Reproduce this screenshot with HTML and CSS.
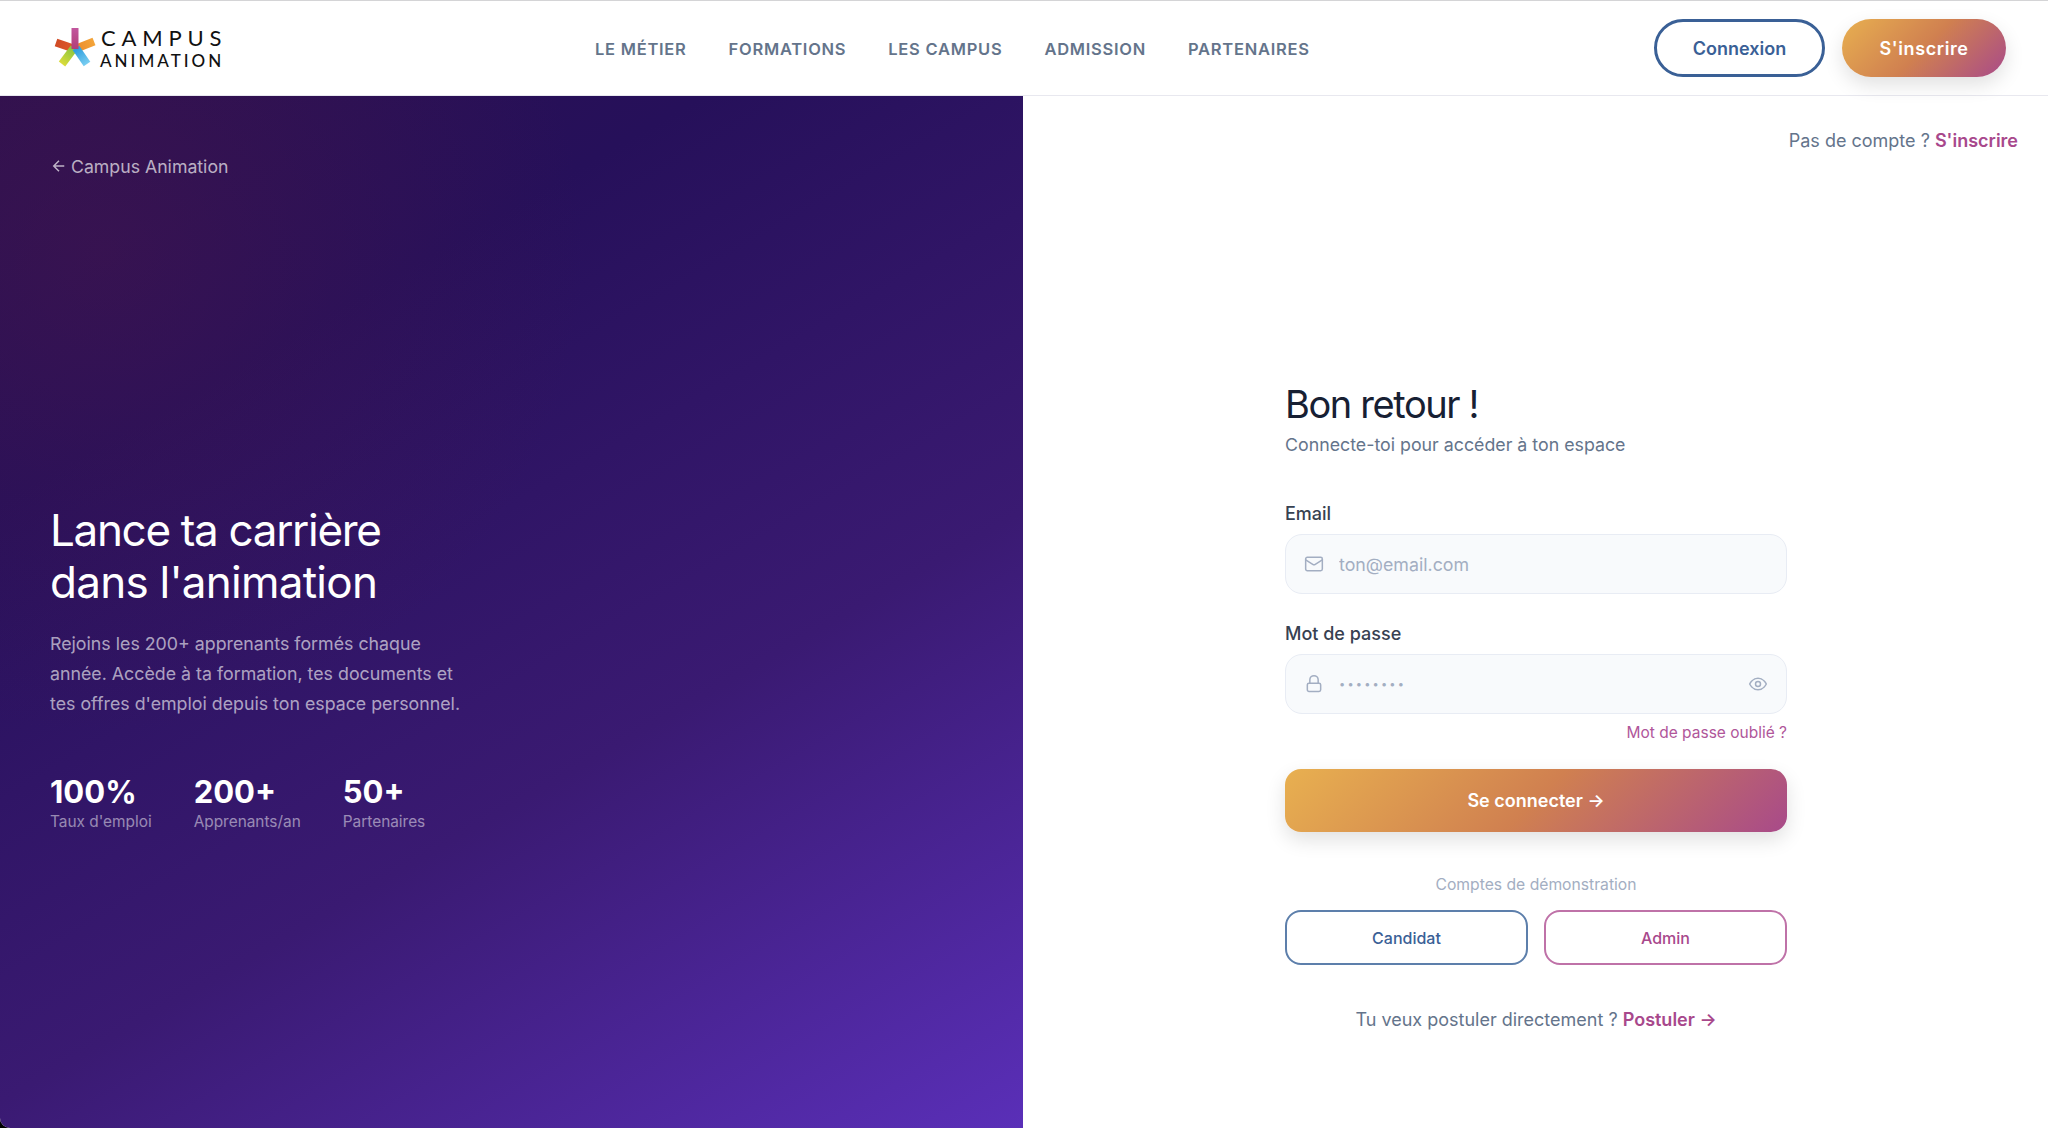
FILE: index.html
```html
<!DOCTYPE html>
<html lang="fr">
<head>
  <meta charset="UTF-8" />
  <meta name="viewport" content="width=device-width, initial-scale=1" />
  <title>Connexion - Campus Animation</title>
  <link rel="stylesheet" href="styles.css">
</head>
<body>
  <div class="page">
    <header class="navbar">
      <a class="logo" href="#">
        <svg class="logo-star" viewBox="0 0 44 42" width="44" height="42">
          <defs>
            <linearGradient id="armTop" gradientUnits="userSpaceOnUse" x1="21" y1="1" x2="21" y2="22"><stop offset="0" stop-color="#c2569e"/><stop offset="1" stop-color="#b13f78"/></linearGradient>
            <linearGradient id="armLeft" gradientUnits="userSpaceOnUse" x1="1" y1="15" x2="21" y2="22"><stop offset="0" stop-color="#cf4a24"/><stop offset="1" stop-color="#e0592b"/></linearGradient>
            <linearGradient id="armRight" gradientUnits="userSpaceOnUse" x1="41" y1="14" x2="21" y2="22"><stop offset="0" stop-color="#f4a63a"/><stop offset="1" stop-color="#ea8a2c"/></linearGradient>
            <linearGradient id="armLime" gradientUnits="userSpaceOnUse" x1="9" y1="38" x2="20" y2="23"><stop offset="0" stop-color="#dcdc3a"/><stop offset="1" stop-color="#8cc63f"/></linearGradient>
            <linearGradient id="armBlue" gradientUnits="userSpaceOnUse" x1="33" y1="38" x2="22" y2="23"><stop offset="0" stop-color="#7dd0f2"/><stop offset="1" stop-color="#2f9ede"/></linearGradient>
          </defs>
          <path d="M21 22 L2 15.5" stroke="url(#armLeft)" stroke-width="8" stroke-linejoin="round"/>
          <path d="M21 22 L40 14.5" stroke="url(#armRight)" stroke-width="8"/>
          <path d="M20 21 L8 37" stroke="url(#armLime)" stroke-width="8"/>
          <path d="M22 21 L33 37" stroke="url(#armBlue)" stroke-width="8"/>
          <path d="M21 1 L21 22" stroke="url(#armTop)" stroke-width="7"/>
        </svg>
        <span class="logo-text">
          <span class="logo-campus">CAMPUS</span>
          <span class="logo-animation">ANIMATION</span>
        </span>
      </a>

      <nav class="nav-links">
        <a href="#">Le métier</a>
        <a href="#">Formations</a>
        <a href="#">Les campus</a>
        <a href="#">Admission</a>
        <a href="#">Partenaires</a>
      </nav>

      <div class="nav-actions">
        <a class="btn-outline" href="#">Connexion</a>
        <a class="btn-gradient" href="#">S'inscrire</a>
      </div>
    </header>

    <main class="split">
      <section class="hero">
        <a class="back-link" href="#">
          <svg class="back-arrow" viewBox="0 0 24 24" width="18" height="18"><path d="M19 12H5M12 19l-7-7 7-7"/></svg>
          Campus Animation
        </a>

        <div class="hero-content">
          <h1>Lance ta carrière<br><span>dans l'animation</span></h1>
          <p>Rejoins les 200+ apprenants formés chaque année. Accède à ta formation, tes documents et tes offres d'emploi depuis ton espace personnel.</p>
          <div class="stats">
            <div class="stat"><strong>100%</strong><span>Taux d'emploi</span></div>
            <div class="stat"><strong>200+</strong><span>Apprenants/an</span></div>
            <div class="stat"><strong>50+</strong><span>Partenaires</span></div>
          </div>
        </div>
      </section>

      <section class="auth">
        <div class="auth-top">Pas de compte ? <a href="#">S'inscrire</a></div>

        <form class="login-form">
          <h2>Bon retour !</h2>
          <p class="subtitle">Connecte-toi pour accéder à ton espace</p>

          <label for="email">Email</label>
          <div class="field">
            <svg class="icon" viewBox="0 0 24 24" width="20" height="20"><rect x="2" y="4" width="20" height="16" rx="2"/><path d="m22 7-8.97 5.7a1.94 1.94 0 0 1-2.06 0L2 7"/></svg>
            <input type="email" id="email" placeholder="ton@email.com" />
          </div>

          <label for="password">Mot de passe</label>
          <div class="field">
            <svg class="icon" viewBox="0 0 24 24" width="20" height="20"><rect x="4" y="11" width="16" height="10" rx="2"/><path d="M7 11V7a5 5 0 0 1 10 0v4"/></svg>
            <input type="password" id="password" class="pass-input" placeholder="••••••••" />
            <svg class="icon" viewBox="0 0 24 24" width="20" height="20"><path d="M2 12s3.6-7 10-7 10 7 10 7-3.6 7-10 7-10-7-10-7Z"/><circle cx="12" cy="12" r="3"/></svg>
          </div>

          <div class="forgot"><a href="#">Mot de passe oublié ?</a></div>

          <button class="submit" type="button">Se connecter →</button>

          <div class="demo-title">Comptes de démonstration</div>
          <div class="demo-buttons">
            <button class="demo-candidate" type="button">Candidat</button>
            <button class="demo-admin" type="button">Admin</button>
          </div>

          <div class="apply">Tu veux postuler directement ? <a href="#">Postuler →</a></div>
        </form>
      </section>
    </main>
  </div>
</body>
</html>
```

FILE: styles.css
```css
html, body {
  height: 100%;
  margin: 0;
  background: #000;
  font-family: 'Inter', 'Liberation Sans', sans-serif;
  overflow: hidden;
}

a {
  text-decoration: none;
  color: inherit;
}

.page {
  height: 1128px;
  display: flex;
  flex-direction: column;
  background: #fff;
  border-top: 1px solid #d4d4d6;
  box-sizing: border-box;
  border-bottom-left-radius: 10px;
  overflow: hidden;
}

/* top bar */
.navbar {
  height: 95px;
  flex: none;
  box-sizing: border-box;
  border-bottom: 1px solid #e8e8ef;
  display: flex;
  align-items: center;
  padding: 0 42px 0 54px;
  background: #fff;
}

.logo {
  display: flex;
  align-items: center;
  gap: 2px;
  width: 541px;
  color: #111;
}

.logo-star {
  fill: none;
}

.logo-text {
  display: flex;
  flex-direction: column;
  font-family: 'Lato', sans-serif;
  line-height: 1;
}

.logo-campus {
  margin-left: 1px;
  font-size: 22px;
  font-weight: 400;
  letter-spacing: 5.8px;
  line-height: 24px;
}

.logo-animation {
  font-size: 17px;
  font-weight: 500;
  letter-spacing: 3px;
  line-height: 21px;
}

.nav-links {
  display: flex;
  gap: 42px;
  font-size: 16.5px;
  font-weight: 600;
  letter-spacing: .74px;
  text-transform: uppercase;
  color: #64748b;
  padding-top: 1px;
}

.nav-actions {
  margin-left: auto;
  display: flex;
  gap: 17px;
}

.btn-outline,
.btn-gradient {
  height: 58px;
  box-sizing: border-box;
  border-radius: 29px;
  display: flex;
  align-items: center;
  justify-content: center;
  font-size: 18px;
  font-weight: 600;
}

.btn-outline {
  width: 171px;
  border: 3px solid #3a6096;
  color: #3a6096;
}

.btn-gradient {
  width: 164px;
  color: #fff;
  letter-spacing: .6px;
  background: linear-gradient(135deg, #e8b050, #d08050 50%, #a84a8a);
  box-shadow: 0 8px 20px rgba(0,0,0,.12);
}

/* two panels */
.split {
  flex: 1;
  display: flex;
  min-height: 0;
}

.hero {
  width: 1023px;
  flex: none;
  box-sizing: border-box;
  padding: 58px 50px 0;
  color: #fff;
  background:
    radial-gradient(circle at 10% 15%, rgba(90,25,70,.3), transparent 38%),
    linear-gradient(150deg, #2a1050 0%, #26105a 25%, #3a1a72 62%, #5a2fb8 100%);
}

.back-link {
  display: flex;
  align-items: center;
  gap: 3px;
  height: 24px;
  font-size: 17.7px;
  color: rgba(255,255,255,.68);
}

.back-arrow {
  fill: none;
  stroke: currentColor;
  stroke-width: 2;
}

.hero-content {
  margin-top: 326px;
  width: 430px;
}

.hero h1 {
  margin: 0;
  font-size: 44px;
  font-weight: 400;
  line-height: 52px;
  letter-spacing: -.03em;
}

.hero h1 span {
  letter-spacing: -.75px;
}

.hero p {
  margin: 21px 0 0;
  font-size: 17.8px;
  line-height: 30px;
  color: rgba(255,255,255,.62);
}

.stats {
  display: flex;
  gap: 42px;
  margin-top: 54px;
}

.stat strong {
  display: block;
  font-size: 31px;
  font-weight: 700;
  line-height: 38px;
}

.stat span {
  display: block;
  margin-top: 1px;
  font-size: 15.4px;
  line-height: 20px;
  color: rgba(255,255,255,.5);
}

/* login side */
.auth {
  flex: 1;
  display: flex;
  flex-direction: column;
  padding-top: 33px;
}

.auth-top {
  align-self: flex-end;
  margin-right: 30px;
  height: 24px;
  line-height: 24px;
  font-size: 18px;
  color: #64748b;
}

.auth-top a {
  color: #a8488c;
  font-weight: 600;
}

.login-form {
  width: 502px;
  margin: 227px 0 0 262px;
}

.login-form h2 {
  margin: 0;
  font-size: 38px;
  font-weight: 400;
  line-height: 48px;
  color: #172033;
  letter-spacing: -1.4px;
}

.subtitle {
  margin: 3px 0 0;
  font-size: 17.8px;
  line-height: 28px;
  color: #64748b;
}

.login-form label {
  display: block;
  margin-bottom: 8px;
  font-size: 18px;
  font-weight: 500;
  line-height: 24px;
  color: #374151;
}

.subtitle + label {
  margin-top: 43px;
}

.field {
  height: 60px;
  box-sizing: border-box;
  display: flex;
  align-items: center;
  gap: 15px;
  padding: 0 18px;
  border: 1.5px solid #e8ecf4;
  border-radius: 17px;
  background: #f8fafc;
}

.field + label {
  margin-top: 28px;
}

.field input {
  flex: 1;
  min-width: 0;
  border: none;
  outline: none;
  padding: 0;
  background: transparent;
  font-family: inherit;
  font-size: 17.8px;
  color: #334155;
}

.field input::placeholder {
  color: #a3aec2;
  opacity: 1;
}

.field .pass-input {
  font-size: 11px;
  letter-spacing: 2.2px;
}

.icon {
  flex: none;
  fill: none;
  stroke: #a3aec2;
  stroke-width: 1.8;
  stroke-linecap: round;
  stroke-linejoin: round;
}

.forgot {
  margin-top: 9px;
  text-align: right;
  font-size: 15.5px;
  line-height: 20px;
  color: #b0569a;
}

.submit {
  display: block;
  width: 100%;
  height: 63px;
  margin-top: 26px;
  border: none;
  border-radius: 16px;
  font-family: inherit;
  font-size: 18px;
  font-weight: 600;
  color: #fff;
  background: linear-gradient(135deg, #e8b050, #d08050 50%, #a84a8a);
  box-shadow: 0 8px 20px rgba(0,0,0,.12);
}

.demo-title {
  margin-top: 42px;
  text-align: center;
  font-size: 15.7px;
  line-height: 22px;
  color: #a3aec2;
}

.demo-buttons {
  display: flex;
  gap: 16px;
  margin-top: 14px;
}

.demo-buttons button {
  flex: 1;
  height: 55px;
  background: #fff;
  border-radius: 16px;
  font-family: inherit;
  font-size: 16px;
  font-weight: 500;
}

.demo-candidate {
  border: 2px solid #5d7fab;
  color: #3a6096;
}

.demo-admin {
  border: 2px solid #bf72a8;
  color: #a8488c;
}

.apply {
  margin-top: 43px;
  text-align: center;
  font-size: 18px;
  line-height: 24px;
  color: #64748b;
}

.apply a {
  color: #a8488c;
  font-weight: 600;
}
```
